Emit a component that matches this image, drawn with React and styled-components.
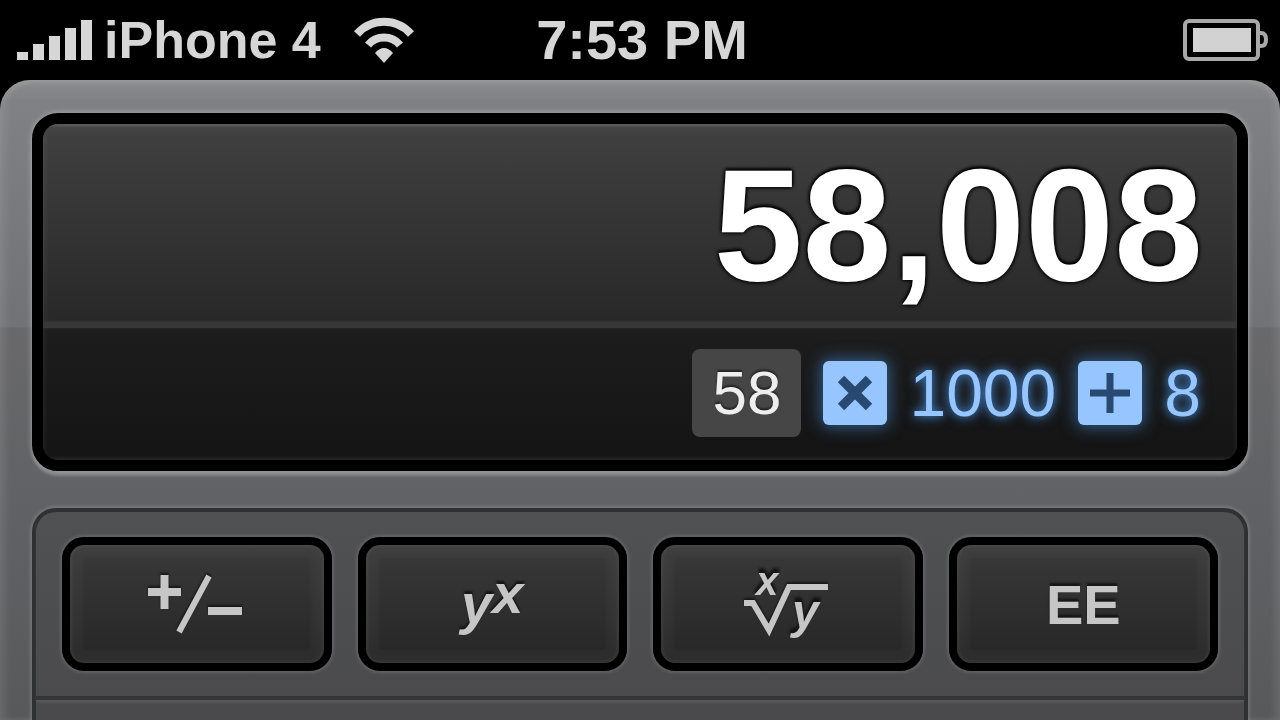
import React from 'react';
import styled, { createGlobalStyle } from 'styled-components';

const history = [
  { type: 'result', value: '58' },
  { type: 'operator', value: 'times' },
  { type: 'number', value: '1000' },
  { type: 'operator', value: 'plus' },
  { type: 'number', value: '8' },
];

export default function App() {
  return (
    <Screen>
      <GlobalStyle />
      <StatusBar>
        <Carrier>
          <SignalIcon />
          <CarrierName>iPhone 4</CarrierName>
          <WifiIcon />
        </Carrier>
        <Clock>7:53 PM</Clock>
        <Power>
          <BatteryIcon />
        </Power>
      </StatusBar>
      <Shell>
        <Display>
          <Result>58,008</Result>
          <Tape>
            {history.map((item, i) => {
              if (item.type === 'result') return <Chip key={i}>{item.value}</Chip>;
              if (item.type === 'operator') return <Operator key={i} name={item.value} />;
              return <Operand key={i}>{item.value}</Operand>;
            })}
          </Tape>
        </Display>
        <Keypad>
          <KeyRow>
            <Key aria-label="Change sign">
              <SignIcon />
            </Key>
            <Key aria-label="y to the power of x">
              <Variable>y<Exponent>x</Exponent></Variable>
            </Key>
            <Key aria-label="x-th root of y">
              <RootIcon />
            </Key>
            <Key>EE</Key>
          </KeyRow>
        </Keypad>
      </Shell>
    </Screen>
  );
}

function SignalIcon() {
  return (
    <svg width="76" height="42" viewBox="0 0 76 42" fill="#d6d6d6" aria-hidden="true">
      <rect x="1" y="33" width="11" height="8" />
      <rect x="17" y="25" width="11" height="16" />
      <rect x="33" y="17" width="11" height="24" />
      <rect x="49" y="9" width="11" height="32" />
      <rect x="65" y="1" width="11" height="40" />
    </svg>
  );
}

function WifiIcon() {
  return (
    <svg width="62" height="48" viewBox="0 0 62 48" fill="none" stroke="#d6d6d6" strokeWidth="8" aria-hidden="true">
      <path d="M4 18 A36 36 0 0 1 58 18" />
      <path d="M15 29 A21 21 0 0 1 47 29" />
      <path d="M22 37 Q31 27 40 37 L31 47 Z" fill="#d6d6d6" stroke="none" />
    </svg>
  );
}

function BatteryIcon() {
  return (
    <svg width="86" height="42" viewBox="0 0 86 42" aria-hidden="true">
      <rect x="3" y="2" width="73" height="38" rx="4" fill="none" stroke="#a8a8a8" strokeWidth="4" />
      <rect x="11" y="9" width="58" height="24" fill="#d2d2d2" />
      <path d="M77 14 H79 Q84 14 84 20.500 Q84 27 79 27 H77" fill="none" stroke="#a8a8a8" strokeWidth="4" />
    </svg>
  );
}

function Operator({ name }) {
  return (
    <OperatorBox>
      <svg width="64" height="64" viewBox="0 0 64 64" stroke="#284a72" role="img" aria-label={name}>
        {name === 'times'
          ? <path d="M18 18 L46 46 M46 18 L18 46" strokeWidth="9" />
          : <path d="M12 32 H52 M32 12 V52" strokeWidth="7" />}
      </svg>
    </OperatorBox>
  );
}

function SignIcon() {
  return (
    <KeyDrawing width="100" height="60" viewBox="0 0 100 60" aria-hidden="true">
      <path d="M1 18 H34 M17.500 1 V35" strokeWidth="8" />
      <path d="M32 58 L62 2" strokeWidth="6" />
      <path d="M61 37 H95" strokeWidth="8" />
    </KeyDrawing>
  );
}

function RootIcon() {
  return (
    <KeyDrawing width="90" height="100" viewBox="0 0 90 100" aria-hidden="true">
      <path d="M1 49 H10 L26 76 L46 33 H85" strokeWidth="6" />
      <text x="13" y="41" fontSize="40">x</text>
      <text x="49" y="74" fontSize="48">y</text>
    </KeyDrawing>
  );
}

const GlobalStyle = createGlobalStyle`
  body {
    margin: 0;
    background: #000000;
    font-family: "Liberation Sans", Arial, sans-serif;
  }
`;

const Screen = styled.div`
  display: flex;
  flex-direction: column;
  height: 100vh;
  overflow: hidden;
  background: #000000;
`;

const StatusBar = styled.header`
  display: grid;
  grid-template-columns: 1fr auto 1fr;
  align-items: center;
  flex: none;
  height: 80px;
  padding: 0 12px 0 16px;
  color: #d6d6d6;
  font-weight: bold;
  line-height: 80px;
  white-space: nowrap;

  svg {
    display: block;
  }
`;

const Carrier = styled.div`
  display: flex;
  align-items: center;
`;

const CarrierName = styled.span`
  margin: 0 32px 0 12px;
  font-size: 52px;
`;

const Clock = styled.time`
  font-size: 56px;
`;

const Power = styled.div`
  display: flex;
  justify-content: flex-end;
`;

const Shell = styled.main`
  display: flex;
  flex-direction: column;
  flex: 1;
  box-sizing: border-box;
  padding: 33px 32px 0;
  border-radius: 30px 30px 0 0;
  background: linear-gradient(#8b8d8f, #808184 20px, #717275 247px, #69696c 248px, #616265 420px, #58595b);
  box-shadow: inset 0 4px 4px rgba(255, 255, 255, 0.06), inset 6px 0 6px rgba(255, 255, 255, 0.08), inset -6px 0 6px rgba(255, 255, 255, 0.08);
`;

const Display = styled.section`
  flex: none;
  margin-bottom: 37px;
  border: 11px solid #000000;
  border-radius: 26px;
  background: #161616;
  box-shadow: 0 0 4px 2px rgba(255, 255, 255, 0.2), 0 5px 3px rgba(255, 255, 255, 0.2);
  overflow: hidden;
`;

const Result = styled.div`
  padding: 4px 34px 0 20px;
  border-bottom: 6px solid #373737;
  background: linear-gradient(#464646, #3f3f3f 12px, #282828);
  box-shadow: inset 0 3px 2px rgba(255, 255, 255, 0.08), inset 3px 0 4px rgba(255, 255, 255, 0.05), inset -3px 0 4px rgba(255, 255, 255, 0.05);
  color: #ffffff;
  font-size: 160px;
  font-weight: bold;
  line-height: 194px;
  text-align: right;
  text-shadow: 0 -2px 3px #000000, 0 0 4px #000000, 0 0 4px #000000;
`;

const Tape = styled.div`
  display: flex;
  align-items: center;
  justify-content: flex-end;
  gap: 22px;
  padding: 21px 36px 23px;
  background: linear-gradient(#1d1d1d, #141414);
  box-shadow: inset 0 -3px 3px rgba(255, 255, 255, 0.06), inset 3px 0 4px rgba(255, 255, 255, 0.04), inset -3px 0 4px rgba(255, 255, 255, 0.04);
`;

const Chip = styled.span`
  padding: 0 20px;
  border-radius: 8px;
  background: #464646;
  color: #eeeeee;
  font-size: 62px;
  line-height: 88px;
  text-shadow: 0 -2px 2px #222222;
`;

const OperatorBox = styled.span`
  display: flex;
  border-radius: 6px;
  background: #96c5ff;
  box-shadow: 0 0 16px 2px rgba(70, 140, 220, 0.6);
`;

const Operand = styled.span`
  color: #96c5ff;
  font-size: 66px;
  line-height: 88px;
  text-shadow: 0 0 8px rgba(70, 140, 220, 0.8), 0 0 14px rgba(70, 140, 220, 0.6);
`;

const Keypad = styled.section`
  flex: 1;
  border: 4px solid #2f3032;
  border-bottom: 0;
  border-radius: 24px 24px 0 0;
  background: linear-gradient(#505153, #4a4a4c);
  box-shadow: 0 0 3px 2px rgba(255, 255, 255, 0.14);
`;

const KeyRow = styled.div`
  display: grid;
  grid-template-columns: repeat(4, 1fr);
  gap: 26px;
  padding: 25px 26px;
  border-bottom: 4px solid #343536;
  box-shadow: 0 3px 2px rgba(255, 255, 255, 0.08);
`;

const Key = styled.button`
  display: flex;
  align-items: center;
  justify-content: center;
  height: 134px;
  padding: 0;
  border: 8px solid #000000;
  border-radius: 22px;
  background: linear-gradient(#393939, #262626);
  box-shadow: 0 0 3px 2px rgba(255, 255, 255, 0.12), inset 0 0 3px 2px rgba(255, 255, 255, 0.06), inset 0 0 4px 13px rgba(255, 255, 255, 0.03);
  color: #c6c6c6;
  font-family: inherit;
  font-size: 56px;
  font-weight: bold;
  text-shadow: 0 -3px 2px #161616;
`;

const Variable = styled.span`
  font-style: italic;
  line-height: 56px;
`;

const Exponent = styled.sup`
  font-size: 56px;
  line-height: 0;
  vertical-align: 10px;
`;

const KeyDrawing = styled.svg`
  fill: none;
  stroke: #c6c6c6;
  filter: drop-shadow(0 -2px 1px #161616);

  text {
    fill: #c6c6c6;
    stroke: none;
    font-style: italic;
    font-weight: bold;
  }
`;
